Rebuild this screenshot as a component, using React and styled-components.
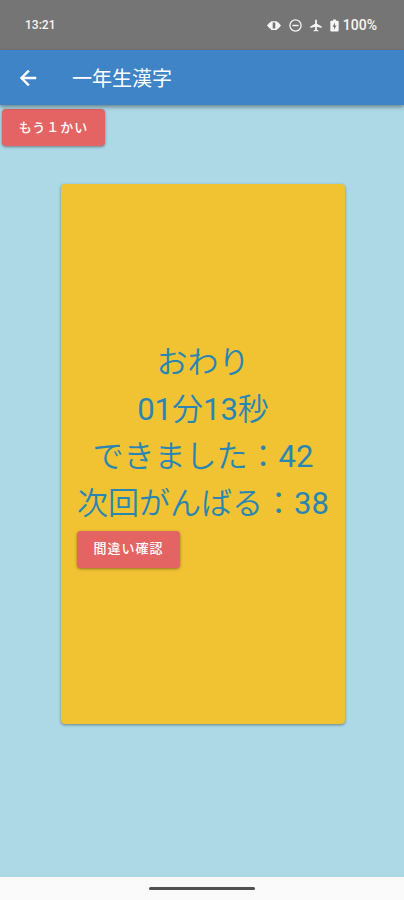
import React from "react";
import styled, { createGlobalStyle } from "styled-components";

const GlobalStyle = createGlobalStyle`
  *, *::before, *::after { box-sizing: border-box; }
  body {
    margin: 0;
    font-family: Roboto, "Noto Sans CJK JP", sans-serif;
    background: #add8e6;
  }
`;

const Screen = styled.div`
  display: flex;
  flex-direction: column;
  min-height: 100vh;
`;

const StatusBar = styled.div`
  display: flex;
  align-items: center;
  justify-content: space-between;
  height: 50px;
  padding: 0 27px 0 25px;
  background: #757575;
  color: #f5f5f5;
  font-weight: 500;
  line-height: 16px;
`;

const Clock = styled.span`
  font-size: 12px;
`;

const StatusIcons = styled.div`
  display: flex;
  align-items: center;
  gap: 8px;
  font-size: 14px;
`;

const Battery = styled.span`
  display: flex;
  align-items: center;
  gap: 4px;
`;

const StatusIcon = styled.svg`
  display: block;
  height: 13px;
  width: ${({ $width }) => $width}px;
  fill: currentColor;
`;

const AppBar = styled.header`
  display: flex;
  align-items: center;
  gap: 32px;
  height: 55px;
  padding: 0 16px;
  background: #3f84c6;
  color: #ffffff;
  box-shadow: 0 2px 4px rgba(0, 0, 0, 0.4);
  z-index: 1;
`;

const BackButton = styled.button`
  display: flex;
  padding: 0;
  border: 0;
  background: none;
  color: inherit;
  cursor: pointer;
`;

const Title = styled.h1`
  margin: 0;
  padding-top: 3px;
  font-size: 20px;
  font-weight: 400;
  line-height: 28px;
`;

const Content = styled.main`
  flex: 1;
  display: flex;
  flex-direction: column;
  align-items: flex-start;
  padding: 4px 0 32px 2px;
`;

const ActionButton = styled.button`
  height: 37px;
  min-width: 103px;
  padding: 0 16px;
  border: 0;
  border-radius: 4px;
  background: #e46464;
  color: #ffffff;
  font: 500 13px/20px Roboto, "Noto Sans CJK JP", sans-serif;
  letter-spacing: 1px;
  box-shadow: 0 1px 3px rgba(0, 0, 0, 0.4);
  cursor: pointer;
`;

const ResultCard = styled.section`
  display: flex;
  align-items: center;
  justify-content: center;
  align-self: center;
  width: 70%;
  min-width: 284px;
  min-height: 60vh;
  margin-top: 38px;
  border-radius: 4px;
  background: #f1c232;
  box-shadow: 0 1px 3px rgba(0, 0, 0, 0.4);
`;

const Result = styled.div`
  display: flex;
  flex-direction: column;
  align-items: flex-start;
  gap: 4px;
  padding-bottom: 2px;
`;

const ResultLines = styled.div`
  color: #2986b4;
  font-size: 31px;
  font-weight: 350;
  line-height: 47px;
  text-align: center;
  white-space: nowrap;
`;

const ResultLine = styled.p`
  margin: 0;
`;

const Digits = styled.span`
  font-weight: 400;
`;

const NavigationBar = styled.div`
  display: flex;
  align-items: center;
  justify-content: center;
  height: 23px;
  background: #fafafa;
`;

const HomeHandle = styled.div`
  width: 106px;
  height: 3px;
  border-radius: 2px;
  background: #505050;
`;

export default function App() {
  return (
    <Screen>
      <GlobalStyle />
      <StatusBar>
        <Clock>13:21</Clock>
        <StatusIcons>
          <StatusIcon $width={14} viewBox="0 0 16 14" aria-hidden="true">
            <path
              fillRule="evenodd"
              d="M4.500 2h7v1.500L12.500 3l3.500 4-3.500 4-1-.5V12h-7v-1.500L3.500 11 0 7l3.500-4 1 .5zM6.500 3.500v7h3v-7z"
            />
          </StatusIcon>
          <StatusIcon $width={13} viewBox="0 0 14 14" aria-hidden="true">
            <circle cx="7" cy="7" r="6" fill="none" stroke="currentColor" strokeWidth="1.4" />
            <path d="M3.700 6.200h6.600v1.600H3.700z" />
          </StatusIcon>
          <StatusIcon $width={12} viewBox="2 2 20 20" aria-hidden="true">
            <path d="M21.500 16v-2.500l-8-4.500V3.500c0-.83-.67-1.500-1.500-1.500s-1.500.67-1.500 1.500V9l-8 4.500V16l8-2v5l-2.500 1.500V22l4-1 4 1v-1.500L13.500 19v-5z" />
          </StatusIcon>
          <Battery>
            <StatusIcon $width={9} viewBox="0 0 9 14" aria-hidden="true">
              <path
                fillRule="evenodd"
                d="M3 .5h3v1.300h2q1 0 1 1V12.500q0 1-1 1H1q-1 0-1-1V2.800q0-1 1-1h2zM5 3.800L2.300 8.300H4v3.200L6.700 7H5z"
              />
            </StatusIcon>
            <span>100%</span>
          </Battery>
        </StatusIcons>
      </StatusBar>
      <AppBar>
        <BackButton type="button" aria-label="戻る">
          <svg width="24" height="24" viewBox="0 0 24 24" fill="currentColor" stroke="currentColor" strokeWidth="0.5" aria-hidden="true">
            <path d="M20 11H7.830l5.590-5.590L12 4l-8 8 8 8 1.410-1.410L7.830 13H20z" />
          </svg>
        </BackButton>
        <Title>一年生漢字</Title>
      </AppBar>
      <Content>
        <ActionButton type="button">もう１かい</ActionButton>
        <ResultCard>
          <Result>
            <ResultLines>
              <ResultLine>おわり</ResultLine>
              <ResultLine>
                <Digits>01</Digits>分<Digits>13</Digits>秒
              </ResultLine>
              <ResultLine>
                できました：<Digits>42</Digits>
              </ResultLine>
              <ResultLine>
                次回がんばる：<Digits>38</Digits>
              </ResultLine>
            </ResultLines>
            <ActionButton type="button">間違い確認</ActionButton>
          </Result>
        </ResultCard>
      </Content>
      <NavigationBar>
        <HomeHandle />
      </NavigationBar>
    </Screen>
  );
}
